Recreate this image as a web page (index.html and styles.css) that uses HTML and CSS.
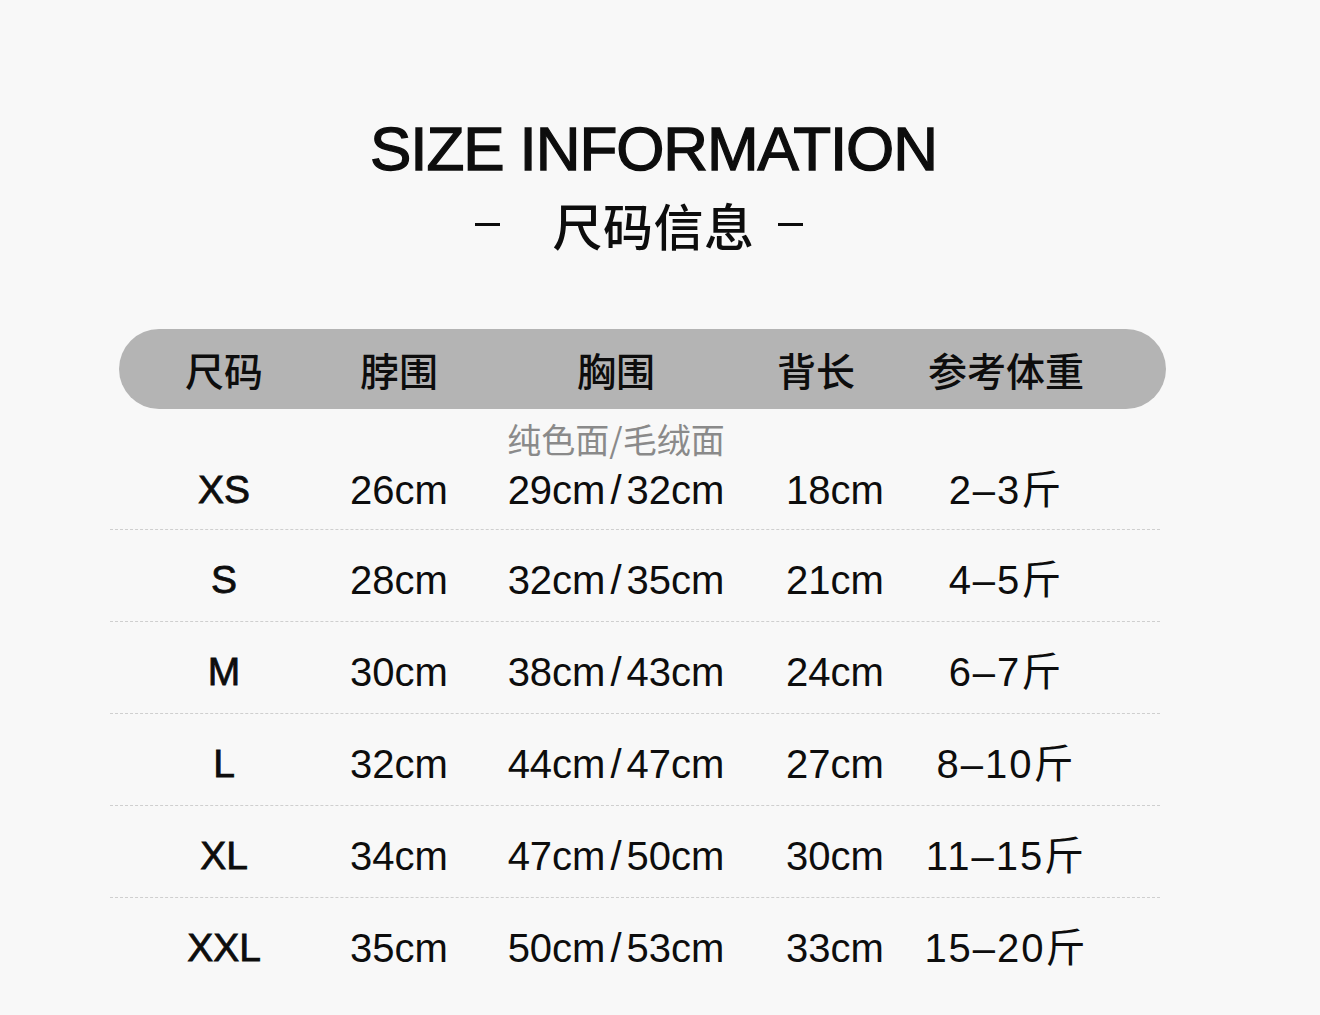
FILE: index.html
```html
<!DOCTYPE html>
<html lang="zh-CN">
<head>
<meta charset="utf-8">
<title>SIZE INFORMATION</title>
<link rel="stylesheet" href="styles.css">
</head>
<body>
<div class="page">
  <h1 class="title">SIZE INFORMATION</h1>
  <div class="subtitle">
    <span class="dash"></span>
    <span class="sub-text">尺码信息</span>
    <span class="dash dash-right"></span>
  </div>

  <div class="head-bar">
    <div class="hcell">尺码</div>
    <div class="hcell">脖围</div>
    <div class="hcell">胸围</div>
    <div class="hcell">背长</div>
    <div class="hcell">参考体重</div>
  </div>

  <div class="table">
    <div class="row note-row">
      <div></div><div></div>
      <div class="note">纯色面/毛绒面</div>
      <div></div><div></div>
    </div>
    <div class="row first">
      <div class="size">XS</div><div>26cm</div><div>29cm<span class="sl">/</span>32cm</div><div>18cm</div><div class="wt">2–3斤</div>
    </div>
    <div class="row">
      <div class="size">S</div><div>28cm</div><div>32cm<span class="sl">/</span>35cm</div><div>21cm</div><div class="wt">4–5斤</div>
    </div>
    <div class="row">
      <div class="size">M</div><div>30cm</div><div>38cm<span class="sl">/</span>43cm</div><div>24cm</div><div class="wt">6–7斤</div>
    </div>
    <div class="row">
      <div class="size">L</div><div>32cm</div><div>44cm<span class="sl">/</span>47cm</div><div>27cm</div><div class="wt">8–10斤</div>
    </div>
    <div class="row">
      <div class="size">XL</div><div>34cm</div><div>47cm<span class="sl">/</span>50cm</div><div>30cm</div><div class="wt">11–15斤</div>
    </div>
    <div class="row last">
      <div class="size">XXL</div><div>35cm</div><div>50cm<span class="sl">/</span>53cm</div><div>33cm</div><div class="wt">15–20斤</div>
    </div>
  </div>
</div>
</body>
</html>
```

FILE: styles.css
```css
html, body {
  margin: 0;
  padding: 0;
  background: #f8f8f8;
}

.page {
  width: 1320px;
  height: 1015px;
  overflow: hidden;
  padding-top: 114px;
  box-sizing: border-box;
  color: #0d0d0d;
  font-family: "Liberation Sans", "Noto Sans CJK SC", sans-serif;
}

.title {
  margin: 0;
  padding-right: 13px;
  text-align: center;
  font-size: 62px;
  line-height: 70px;
  font-weight: normal;
  letter-spacing: -1.1px;
  -webkit-text-stroke: 1.3px #0d0d0d;
}

.subtitle {
  margin-top: 10px;
  height: 60px;
  display: flex;
  align-items: center;
  justify-content: center;
  padding-right: 43px;
}

.sub-text {
  font-family: "Noto Sans CJK SC", sans-serif;
  font-size: 50px;
  line-height: 60px;
  font-weight: 500;
  letter-spacing: 0.5px;
  margin: 0 23px 0 53px;
}

.dash {
  display: inline-block;
  width: 25px;
  height: 3px;
  background: #0d0d0d;
}

.head-bar {
  margin: 75px 0 0 119px;
  width: 1047px;
  height: 80px;
  border-radius: 40px;
  background: #b4b4b4;
  display: grid;
  grid-template-columns: 210px 140px 294px 106px 274px 1fr;
  align-items: center;
}

.hcell {
  text-align: center;
  white-space: nowrap;
  font-family: "Noto Sans CJK SC", sans-serif;
  font-size: 39px;
  font-weight: 500;
  line-height: 50px;
  color: #0d0d0d;
}

.table {
  margin-left: 110px;
  width: 1050px;
}

.row {
  display: grid;
  grid-template-columns: 228px 122px 312px 126px 216px 1fr;
  padding: 30px 0 21px;
  border-bottom: 1px dashed #cfcfcf;
  font-size: 40px;
  line-height: 40px;
  text-align: center;
  white-space: nowrap;
}

.row > div {
  text-align: center;
}

.note-row {
  margin-top: 10px;
  padding: 0;
  border-bottom: none;
}

.note {
  font-family: "Noto Sans CJK SC", sans-serif;
  font-size: 34px;
  line-height: 40px;
  color: #8a8a8a;
  font-weight: 400;
}

.row.first {
  padding-top: 11px;
  padding-bottom: 19px;
}

.row.last {
  border-bottom: none;
}

.size {
  font-size: 39px;
  -webkit-text-stroke: 0.8px #0d0d0d;
}

.wt {
  letter-spacing: 2px;
}

.sl {
  padding: 0 5px;
}
```
